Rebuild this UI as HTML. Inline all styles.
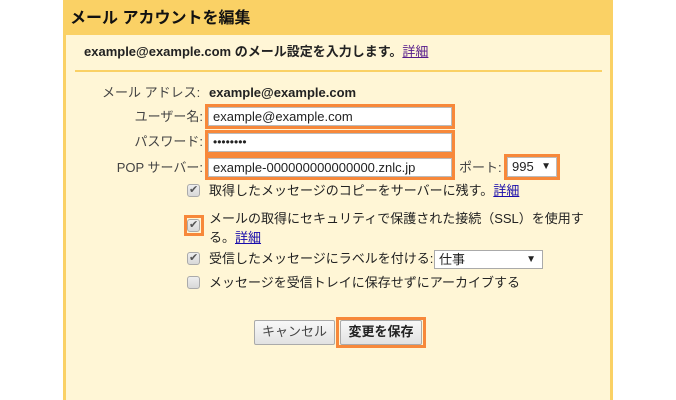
<!DOCTYPE html>
<html><head><meta charset="utf-8"><style>
*{margin:0;padding:0;box-sizing:border-box}
body{width:676px;height:400px;background:#fff;position:relative;overflow:hidden;font-family:"Liberation Sans","Noto Sans CJK JP",sans-serif;font-size:13px;color:#222}
.a{position:absolute}
#outer{left:63px;top:0;width:550px;height:400px;background:#fad165}
#inner{left:66px;top:35px;width:544px;height:365px;background:#fff6d6}
.t{white-space:nowrap;line-height:16px}
.box{position:absolute;border:3px solid #f7883a}
.inp{position:absolute;background:#fff;border:1px solid #bbb;font-size:13px;line-height:20px;padding-left:4px;white-space:nowrap}
.cb{position:absolute;width:13px;height:13px;border:1px solid #aaa;border-radius:3px;background:linear-gradient(#eee,#d8d8d8)}
.cb.c::after{content:"✔";position:absolute;left:1px;top:-2px;font-size:11px;color:#555}
a{color:#1a0dab;text-decoration:underline}
.btn{position:absolute;border:1px solid #aaa;border-radius:2px;background:linear-gradient(#f8f8f8,#e2e2e2);font-size:13px;text-align:center;line-height:22px}
</style></head><body>
<div id="outer" class="a"></div>
<div id="inner" class="a"></div>
<div class="a t" style="left:70px;top:9px;font-size:16px;font-weight:bold;color:#111;line-height:20px">メール アカウントを編集</div>
<div class="a t" style="left:84px;top:44px;font-size:13px;font-weight:bold;color:#222">example@example.com のメール設定を入力します。<a href="#" style="color:#551a8b;font-weight:normal">詳細</a></div>
<div class="a" style="left:75px;top:70px;width:527px;height:2px;background:#fad165"></div>

<div class="a t" style="left:102px;top:85px;color:#444">メール アドレス:</div>
<div class="a t" style="left:209px;top:85px;font-weight:bold">example@example.com</div>

<div class="a t" style="left:118px;top:109px;color:#444;width:85px;text-align:right">ユーザー名:</div>
<div class="box" style="left:205px;top:104px;width:250px;height:25px"></div>
<div class="inp" style="left:208px;top:107px;width:244px;height:19px;line-height:18px">example@example.com</div>

<div class="a t" style="left:118px;top:134px;color:#444;width:85px;text-align:right">パスワード:</div>
<div class="box" style="left:205px;top:130px;width:250px;height:25px"></div>
<div class="inp" style="left:208px;top:133px;width:244px;height:19px;line-height:16px;font-size:12px">••••••••</div>

<div class="a t" style="left:100px;top:160px;color:#444;width:103px;text-align:right">POP サーバー:</div>
<div class="box" style="left:205px;top:155px;width:250px;height:25px"></div>
<div class="inp" style="left:208px;top:158px;width:244px;height:19px;line-height:18px">example-000000000000000.znlc.jp</div>
<div class="a t" style="left:459px;top:160px;color:#444">ポート:</div>
<div class="box" style="left:504px;top:154px;width:56px;height:26px"></div>
<div class="inp" style="left:507px;top:157px;width:50px;height:20px;line-height:18px">995<span style="position:absolute;right:5px;font-size:10px">▼</span></div>

<div class="cb c" style="left:187px;top:184px"></div>
<div class="a t" style="left:209px;top:183px">取得したメッセージのコピーをサーバーに残す。<a href="#">詳細</a></div>
<div class="box" style="left:184px;top:215px;width:20px;height:21px"></div>
<div class="cb c" style="left:187px;top:219px"></div>
<div class="a t" style="left:209px;top:209px;line-height:19px">メールの取得にセキュリティで保護された接続（SSL）を使用す<br>る。<a href="#">詳細</a></div>
<div class="cb c" style="left:187px;top:252px"></div>
<div class="a t" style="left:209px;top:251px">受信したメッセージにラベルを付ける:</div>
<div class="inp" style="left:434px;top:250px;width:109px;height:19px;line-height:17px;border-color:#aaa">仕事<span style="position:absolute;right:6px;font-size:10px">▼</span></div>
<div class="cb" style="left:187px;top:276px"></div>
<div class="a t" style="left:209px;top:275px">メッセージを受信トレイに保存せずにアーカイブする</div>

<div class="btn" style="left:254px;top:320px;width:81px;height:25px;color:#444">キャンセル</div>
<div class="box" style="left:336px;top:317px;width:90px;height:31px"></div>
<div class="btn" style="left:340px;top:320px;width:82px;height:25px;font-weight:bold;color:#222">変更を保存</div>
</body></html>
